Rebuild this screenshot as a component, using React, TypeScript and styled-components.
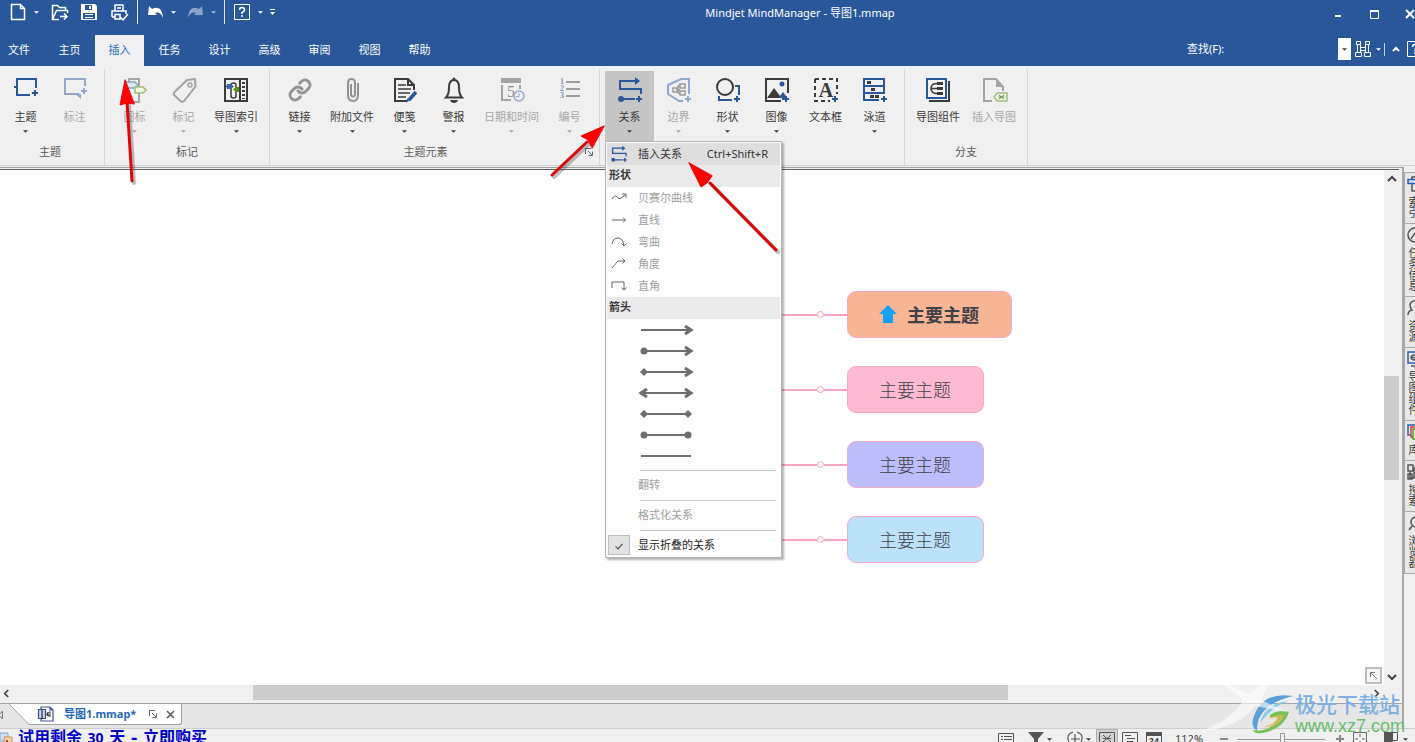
import React from "react";
import styled, { createGlobalStyle, css } from "styled-components";
import { Link as LinkIcon } from "lucide-react";

const BLUE = "#2a579a";
const DARK = "#3b3b3b";

const Global = createGlobalStyle`
  html, body, #root { height: 100%; }
  body {
    margin: 0;
    overflow: hidden;
    font-family: "Noto Sans", "Noto Sans CJK SC", sans-serif;
    font-size: 11px;
    line-height: 16px;
    color: ${DARK};
  }
  *, *::before, *::after { box-sizing: border-box; }
  button, input, select { font: inherit; color: inherit; }
  svg { display: block; flex: none; overflow: visible; }
`;

const Shell = styled.div`
  position: relative;
  display: flex;
  flex-direction: column;
  height: 100vh;
  overflow: hidden;
  background: #f0f0f0;
`;

const PlainButton = styled.button`
  display: flex;
  align-items: center;
  justify-content: center;
  padding: 0;
  border: 0;
  background: transparent;
  flex: none;
`;

/* ---------- title bar ---------- */

const TitleBar = styled.header`
  display: flex;
  flex: none;
  height: 35px;
  background: ${BLUE};
  color: #fff;
`;

const QuickAccess = styled.div`
  display: flex;
  align-items: center;
  height: 24px;
  padding-left: 4px;
`;

const QuickButton = styled(PlainButton)<{ $wide?: boolean; $dim?: boolean }>`
  width: ${(p) => (p.$wide ? 30 : 28)}px;
  height: 24px;
  opacity: ${(p) => (p.$dim ? 0.45 : 1)};
`;

const CaretButton = styled(PlainButton)<{ $dim?: boolean }>`
  width: 8px;
  height: 20px;
  margin-right: 4px;
  opacity: ${(p) => (p.$dim ? 0.6 : 1)};
`;

const QuickDivider = styled.span`
  width: 1px;
  height: 24px;
  margin: 0 3px;
  background: #dfe6f1;
`;

const WindowTitle = styled.h1`
  flex: 1;
  margin: 0;
  padding-top: 5px;
  font-size: 11px;
  font-weight: 400;
  text-align: center;
`;

const WindowButtons = styled.div`
  display: flex;
  width: 95px;
  height: 28px;
  overflow: hidden;
`;

const WindowButton = styled(PlainButton)`
  width: 36px;
  height: 28px;
`;

/* ---------- ribbon tabs ---------- */

const TabRow = styled.nav`
  display: flex;
  flex: none;
  height: 31px;
  background: ${BLUE};
  color: #fff;
`;

const Tab = styled.button<{ $active?: boolean; $first?: boolean }>`
  width: ${(p) => (p.$first ? 45 : 50)}px;
  padding: 0 0 1px;
  border: 0;
  border-right: 1px solid ${BLUE};
  background: ${(p) => (p.$active ? "#f0f0f0" : "transparent")};
  color: ${(p) => (p.$active ? "#2b6cb8" : "#fff")};
  ${(p) => p.$first && css`padding-left: 8px; text-align: left;`}
`;

const Search = styled.div`
  display: flex;
  align-items: center;
  width: 228px;
  height: 28px;
  margin-left: auto;
  overflow: hidden;
`;

const SearchLabel = styled.label`
  width: 40px;
  flex: none;
`;

const SearchInput = styled.input`
  width: 111px;
  height: 22px;
  flex: none;
  padding: 0 4px;
  border: 0;
  background: transparent;
  color: #fff;
`;

const SearchDrop = styled(PlainButton)`
  width: 13px;
  height: 22px;
  background: #fff;
  color: #444;
`;

const SearchTool = styled(PlainButton)<{ $w: number }>`
  width: ${(p) => p.$w}px;
  height: 22px;
`;

const SearchDivider = styled.span`
  width: 1px;
  height: 13px;
  flex: none;
  margin: 0 3px;
  background: #c5d0e2;
`;

/* ---------- ribbon ---------- */

const Ribbon = styled.section`
  display: flex;
  flex: none;
  height: 100px;
  padding-top: 3px;
  border-bottom: 1px solid #cfcfcf;
  background: #f0f0f0;
`;

const Group = styled.div<{ $first?: boolean }>`
  position: relative;
  display: flex;
  flex-direction: column;
  flex: none;
  padding: 2px 5px 0 ${(p) => (p.$first ? 1 : 5)}px;
  border-right: 1px solid #d4d4d4;
`;

const GroupButtons = styled.div`
  display: flex;
  height: 70px;
`;

const GroupTitle = styled.div<{ $launcher?: boolean }>`
  padding: 3px ${(p) => (p.$launcher ? 18 : 0)}px 0 0;
  text-align: center;
  color: #5a5a5a;
`;

const Launcher = styled(PlainButton)`
  position: absolute;
  right: 6px;
  bottom: 9px;
  width: 9px;
  height: 9px;
`;

const RibbonButton = styled.button<{ $dim?: boolean; $open?: boolean }>`
  display: flex;
  flex-direction: column;
  align-items: center;
  min-width: 49px;
  height: 70px;
  padding: 5px 6px 0;
  border: 0;
  background: ${(p) => (p.$open ? "#c5c5c5" : "transparent")};
  color: ${(p) => (p.$dim ? "#a6a6a6" : "#3a3a3a")};
  white-space: nowrap;
`;

const ButtonLabel = styled.span`
  margin-top: 5px;
  line-height: 16px;
`;

const ButtonCaret = styled.span`
  display: flex;
  align-items: center;
  height: 12px;
`;

const MenuAnchor = styled.div`
  position: relative;
`;

/* ---------- drop-down menu ---------- */

const Menu = styled.div`
  position: absolute;
  z-index: 5;
  top: 70px;
  left: 0;
  width: 177px;
  padding: 1px;
  border: 1px solid #b4b4b4;
  background: #fdfdfd;
  box-shadow: 2px 2px 2px rgba(0, 0, 0, 0.3);
`;

const MenuRow = styled.button<{ $dim?: boolean; $hot?: boolean }>`
  display: flex;
  align-items: center;
  width: 100%;
  height: 22px;
  padding: 0 12px 0 1px;
  border: 0;
  background: ${(p) => (p.$hot ? "#dedede" : "transparent")};
  color: ${(p) => (p.$dim ? "#a0a0a0" : "#333")};
  text-align: left;
`;

const MenuIcon = styled.span`
  display: flex;
  justify-content: center;
  width: 22px;
  margin-right: 8px;
  flex: none;
`;

const Shortcut = styled.span`
  margin-left: auto;
`;

const MenuHeading = styled.div`
  height: 22px;
  padding: 2px 2px 0;
  background: #eaeaea;
  font-weight: 700;
`;

const ArrowRow = styled.button`
  display: flex;
  align-items: center;
  width: 100%;
  height: 21px;
  padding: 0 0 0 33px;
  border: 0;
  background: transparent;
`;

const MenuLine = styled.hr`
  height: 1px;
  margin: 4px 4px 3px 33px;
  border: 0;
  background: #c8c8c8;
`;

const CheckRow = styled.label`
  display: flex;
  align-items: center;
  height: 22px;
  padding-left: 1px;
  color: #222;
`;

const CheckBox = styled.input`
  appearance: none;
  display: grid;
  place-items: center;
  width: 22px;
  height: 20px;
  margin: 0 8px 0 0;
  border: 1px solid #bdbdbd;
  background: #e2e2e2;
  &:checked::before {
    content: "";
    width: 4px;
    height: 7px;
    border: solid #444;
    border-width: 0 1px 1px 0;
    transform: rotate(42deg);
  }
`;

/* ---------- workspace ---------- */

const Workspace = styled.main`
  display: flex;
  flex: 1;
  min-height: 0;
`;

const DocumentPane = styled.div`
  display: flex;
  flex-direction: column;
  flex: 1;
  min-width: 0;
  margin-top: 1px;
  border-top: 1px solid #a0a0a0;
  border-right: 2px solid #a8a8a8;
`;

const Viewport = styled.div`
  display: flex;
  flex: 1;
  min-height: 0;
  margin: 1px 3px 0 0;
  border-top: 1px solid #5f5f5f;
`;

const Canvas = styled.div`
  position: relative;
  flex: 1;
  overflow: hidden;
  background: #fff;
`;

const Branches = styled.div`
  position: absolute;
  top: 121px;
  left: 770px;
  display: flex;
  flex-direction: column;
  gap: 28px;
`;

const Branch = styled.div`
  display: flex;
  align-items: center;
`;

const Wire = styled.span<{ $w: number }>`
  width: ${(p) => p.$w}px;
  height: 2px;
  background: #f6a6bf;
`;

const Joint = styled.span`
  width: 7px;
  height: 7px;
  border: 1px solid #f3a0ba;
  border-radius: 50%;
  background: #fff;
`;

const Topic = styled.div<{ $fill: string; $strong?: boolean }>`
  display: flex;
  align-items: center;
  gap: 10px;
  height: 47px;
  padding: 0 32px 1px 31px;
  border: 1px solid #f5a9c8;
  border-radius: 9px;
  background: ${(p) => p.$fill};
  color: #3f4048;
  font-family: "Noto Sans CJK SC", sans-serif;
  font-size: 18px;
  line-height: 26px;
  font-weight: ${(p) => (p.$strong ? 700 : 300)};
`;

const FitButton = styled(PlainButton)`
  position: absolute;
  right: 2px;
  bottom: 1px;
  width: 17px;
  height: 17px;
  border: 2px solid #bdbdbd;
  background: #f5f5f5;
`;

const VScroll = styled.div`
  display: flex;
  flex-direction: column;
  width: 15px;
  background: #f0f0f0;
`;

const HScroll = styled.div`
  display: flex;
  flex: none;
  height: 15px;
  padding-right: 19px;
  background: #f0f0f0;
`;

const ScrollButton = styled(PlainButton)`
  min-width: 13px;
  min-height: 17px;
  max-height: 17px;
`;

const Track = styled.span<{ $grow: number; $thumb?: boolean }>`
  flex: ${(p) => p.$grow} 1 0;
  background: ${(p) => (p.$thumb ? "#cdcdcd" : "transparent")};
`;

const DocTabs = styled.div`
  display: flex;
  flex: none;
  height: 25px;
  margin-top: 3px;
  border-top: 1px solid #a3a3a3;
  background: #e6e6e6;
`;

const DocTab = styled.div`
  display: flex;
  align-items: center;
  height: 21px;
  padding: 0 6px 0 7px;
  border: solid #a3a3a3;
  border-width: 0 1px 1px 0;
  border-radius: 0 0 3px 0;
  background: #fff;
`;

const DocName = styled.span`
  margin: 0 13px 0 10px;
  color: #1f68b8;
  font-weight: 700;
`;

const DocClose = styled(PlainButton)`
  margin-left: 9px;
`;

const Sidebar = styled.aside`
  display: flex;
  flex-direction: column;
  width: 11px;
  flex: none;
  padding-top: 6px;
  overflow: hidden;
  background: #f0f0f0;
`;

const SideTab = styled.button`
  display: flex;
  flex-direction: column;
  align-items: flex-start;
  gap: 4px;
  flex: none;
  width: 26px;
  padding: 3px 0 5px 2px;
  border: solid #a8a8a8;
  border-width: 1px 0 0 1px;
  background: #e8e8e8;
  &:last-child { border-bottom-width: 1px; }
`;

const SideText = styled.span`
  writing-mode: vertical-rl;
  line-height: 12px;
`;

/* ---------- status bar ---------- */

const StatusBar = styled.footer`
  flex: none;
  height: 14px;
  overflow: hidden;
  background: #f0f0f0;
  border-top: 1px solid #cdcdcd;
`;

const StatusRow = styled.div`
  display: flex;
  align-items: center;
  height: 20px;
`;

const TrialLink = styled.a`
  display: flex;
  align-items: center;
  gap: 4px;
  height: 18px;
  align-self: flex-start;
  color: #0000c4;
  font-family: "DejaVu Sans", "Noto Sans CJK SC", sans-serif;
  font-size: 16px;
  line-height: 18px;
  font-weight: 700;
  text-decoration: none;
  white-space: nowrap;
`;

const TrialDays = styled.span`
  font-family: "Noto Sans", sans-serif;
  font-size: 14px;
`;

const StatusTools = styled.div`
  display: flex;
  align-items: center;
  margin-left: auto;
  padding-right: 2px;
`;

const StatusButton = styled(PlainButton)<{ $w: number; $gap?: number; $on?: boolean }>`
  width: ${(p) => p.$w}px;
  height: 20px;
  margin-left: ${(p) => p.$gap ?? 0}px;
  ${(p) => p.$on && css`border: 1px solid #b0b0b0; background: #d2d2d2;`}
`;

const ZoomValue = styled.span`
  width: 51px;
  padding-left: 9px;
  color: #444;
`;

const ZoomSlider = styled.input`
  appearance: none;
  width: 88px;
  height: 12px;
  margin: 0 6px;
  background: linear-gradient(#9a9a9a, #9a9a9a) center / 100% 1px no-repeat;
  &::-webkit-slider-thumb {
    appearance: none;
    width: 5px;
    height: 12px;
    border: 1px solid #9a9a9a;
    background: #f0f0f0;
  }
`;

/* ---------- overlays ---------- */

const Pointers = styled.svg`
  position: absolute;
  z-index: 10;
  top: 0;
  left: 0;
  pointer-events: none;
`;

const Watermark = styled.div`
  position: absolute;
  z-index: 9;
  right: 10px;
  bottom: 6px;
  display: flex;
  align-items: center;
  pointer-events: none;
`;

const Beam = styled.svg`
  position: absolute;
  right: 96px;
  bottom: -2px;
`;

const MarkName = styled.div`
  color: #7db0e2;
  font-size: 21px;
  line-height: 24px;
  font-weight: 500;
`;

const MarkUrl = styled.div`
  color: #67bd6a;
  font-family: "Liberation Sans", sans-serif;
  font-size: 18px;
  line-height: 20px;
`;

/* ---------- drawings ---------- */

const Caret = ({ w = 5, color = "currentColor" }: { w?: number; color?: string }) => (
  <svg width={w} height={3} viewBox="0 0 6 3"><path d="M0 0h6L3 3z" fill={color} /></svg>
);

const Pic = ({ children, size = 28, box = 28 }: { children: React.ReactNode; size?: number; box?: number }) => (
  <svg width={size} height={size} viewBox={`0 0 ${box} ${box}`} fill="none">{children}</svg>
);

const RelationDrawing = () => (
  <>
    <path d="M3 5h18M4 5v8H25v5" stroke={BLUE} strokeWidth="2" />
    <path d="M19 1v8l5-4z" fill={BLUE} />
    <circle cx="5" cy="23" r="3" fill={BLUE} />
    <path d="M6 23h13M20 23h6M23 20v6" stroke={BLUE} strokeWidth="2" />
  </>
);

const icons: Record<string, React.ReactNode> = {
  topic: <Pic><path d="M18 19H5V3h19v9M2 11h3M20 17h6M23 14v6" stroke={BLUE} strokeWidth="2" /></Pic>,
  callout: <Pic><path d="M18 18H4V3h20v7M20 15h6M23 12v6" stroke="#94a7c8" strokeWidth="2" /><path d="M14 18h6v5z" fill="#94a7c8" /></Pic>,
  marker: (
    <Pic>
      <path d="M8 7V3h10v8M18 17v9H8v-8" stroke="#a6a6a6" strokeWidth="2" />
      <path d="M5 6h9l3 3-3 3H5z" fill="#dfe7f3" stroke="#8aa2cc" strokeWidth="1.500" />
      <path d="M14 11h8l3 3-3 3h-8z" fill="#edf5e4" stroke="#9fbf7d" strokeWidth="1.500" />
    </Pic>
  ),
  tag: <Pic><path d="M17 4l8-1 .5 7.500L14 25q-2 1.500-3.500 0l-6-5.500q-1.500-1.500 0-3.500z" stroke="#a3a3a3" strokeWidth="2" /><circle cx="20" cy="9" r="2" stroke="#a3a3a3" strokeWidth="1.500" /></Pic>,
  index: (
    <Pic>
      <path d="M3 3h22v22H3zM18 3v22" stroke={DARK} strokeWidth="2" />
      <path d="M21.500 6v17" stroke={DARK} strokeWidth="3" strokeDasharray="2 2" />
      <path d="M9 20V9q0-2 2.500-2T14 9v11q0 2-2.500 2T9 20z" stroke={DARK} strokeWidth="1.500" />
      <path d="M4 10.500h5M14 13.500h4" stroke={DARK} strokeWidth="1.500" />
      <path d="M5 8h4l3 2.500L9 13H5z" fill="#3c66ad" /><path d="M11 13.500l3-2.500h3v5h-3z" fill="#5a9216" />
    </Pic>
  ),
  link: <Pic><g transform="translate(2 2)"><LinkIcon size={24} color="#939393" strokeWidth={3} /></g></Pic>,
  clip: <Pic><path d="M13 8v10q0 2.500 2 2.500t2-2.500V7q0-4-3.500-4T10 7v12q0 6 5 6t5-6V7" stroke="#939393" strokeWidth="2" /></Pic>,
  note: (
    <Pic>
      <path d="M16 25H4V3h13l6 6v5M17 3v6h6" stroke={DARK} strokeWidth="2" />
      <path d="M7 9h8M7 13h13M7 17h12M7 21h8" stroke={DARK} strokeWidth="1.500" />
      <path d="M18 24l7-8" stroke={BLUE} strokeWidth="3.500" /><path d="M15 26.500l1-4 3 2z" fill={BLUE} />
    </Pic>
  ),
  bell: <Pic><path d="M6 21.500q3-3 3-10Q9 4 14 4t5 7.500q0 7 3 10z" stroke={DARK} strokeWidth="2" /><circle cx="14" cy="3" r="1.500" fill={DARK} /><path d="M10 24h8q-1 3-4 3t-4-3z" fill={DARK} /></Pic>,
  date: (
    <Pic>
      <path d="M3 2h20v5H3z" fill="#a3a3a3" /><path d="M4 9v15h9M22 9v4" stroke="#a3a3a3" strokeWidth="2" />
      <text x="9" y="21" fontSize="16" fontFamily="Liberation Serif" fill="#8c8c8c">5</text>
      <circle cx="21" cy="20" r="5" fill="#f0f0f0" stroke="#93a8cf" strokeWidth="1.500" /><path d="M21 17v3.500h-3" stroke="#93a8cf" />
    </Pic>
  ),
  number: (
    <Pic>
      <path d="M10 6h14M10 13h14M10 20h14" stroke="#9c9c9c" strokeWidth="2" />
      {["1", "2", "3"].map((n, i) => <text key={n} x="4" y={8 + i * 7} fontSize="8" fontFamily="Liberation Serif" fontWeight="700" fill="#8094c2">{n}</text>)}
    </Pic>
  ),
  relation: <Pic><RelationDrawing /></Pic>,
  boundary: (
    <Pic>
      <path d="M24 18V3h-8L3 9v9l11 7h4M20 23h6M23 20v6" stroke="#8ea8d2" strokeWidth="2" />
      <path d="M8 12h4v4H8zM15 8h5v4h-5zM15 15h5v4h-5zM12 14h3M15 10h-2v7h2" stroke="#9b9b9b" strokeWidth="1.500" />
    </Pic>
  ),
  shape: <Pic><circle cx="11" cy="11" r="8" stroke={DARK} strokeWidth="2" /><path d="M21 10h4v9M5 20v4h13M20 23h6M23 20v6" stroke={BLUE} strokeWidth="2" /></Pic>,
  image: (
    <Pic>
      <path d="M18 25H3V3h22v14" stroke={DARK} strokeWidth="2" /><path d="M4 22l7-10 6 8 3-3 2 3-4 2z" fill={DARK} />
      <path d="M16 22l4-6 3 4v2z" fill={BLUE} /><circle cx="19" cy="8" r="2.500" fill={BLUE} /><path d="M19 23h7M23 20v6" stroke={BLUE} strokeWidth="2" />
    </Pic>
  ),
  textbox: (
    <Pic>
      <path d="M3 3h22v15M3 3v22h15" stroke={DARK} strokeWidth="2" strokeDasharray="4 3" />
      <text x="14" y="21" textAnchor="middle" fontSize="20" fontFamily="Liberation Serif" fontWeight="700" fill={DARK}>A</text>
      <path d="M20 23h6M23 20v6" stroke={BLUE} strokeWidth="2" />
    </Pic>
  ),
  lanes: (
    <Pic>
      <path d="M18 24H3V3h20v15M3 10h20M3 17h20" stroke={BLUE} strokeWidth="2" />
      <path d="M6 5h4v3H6zM10 12h4v3h-4zM9 19h4v3H9zM14 19h4v3h-4z" fill={DARK} /><path d="M20 23h6M23 20v6" stroke={BLUE} strokeWidth="2" />
    </Pic>
  ),
  parts: (
    <Pic>
      <path d="M5 25h20V5" stroke={DARK} strokeWidth="2" /><path d="M3 3h19v19H3z" stroke={BLUE} strokeWidth="2" fill="#f4f4f4" />
      <path d="M13 7.500q-6 0-6 5t6 5M7 12.500h6" stroke={DARK} strokeWidth="1.500" /><path d="M13 6h6v3h-6zM13 11h6v3h-6zM13 16h6v3h-6z" fill={DARK} />
    </Pic>
  ),
  insertMap: (
    <Pic>
      <path d="M12 25H4V3h12l7 8v4" stroke="#a3a3a3" strokeWidth="2" /><path d="M16 2l8 9h-8z" fill="#a3a3a3" />
      <path d="M14 21l3-4h10v8H17z" fill="#eef5e6" stroke="#9cbf80" strokeWidth="1.500" /><path d="M19 19l5 4M24 19l-5 4M18.500 21h6" stroke="#6f9152" />
    </Pic>
  ),
};

type Cmd = { icon: string; label: string; dim?: boolean; caret?: boolean; menu?: boolean };
const groups: { title: string; launcher?: boolean; items: Cmd[] }[] = [
  { title: "主题", items: [{ icon: "topic", label: "主题", caret: true }, { icon: "callout", label: "标注", dim: true }] },
  { title: "标记", items: [
    { icon: "marker", label: "图标", dim: true, caret: true },
    { icon: "tag", label: "标记", dim: true, caret: true },
    { icon: "index", label: "导图索引", caret: true },
  ] },
  { title: "主题元素", launcher: true, items: [
    { icon: "link", label: "链接", caret: true },
    { icon: "clip", label: "附加文件", caret: true },
    { icon: "note", label: "便笺", caret: true },
    { icon: "bell", label: "警报", caret: true },
    { icon: "date", label: "日期和时间", dim: true, caret: true },
    { icon: "number", label: "编号", dim: true, caret: true },
  ] },
  { title: "", items: [
    { icon: "relation", label: "关系", caret: true, menu: true },
    { icon: "boundary", label: "边界", dim: true, caret: true },
    { icon: "shape", label: "形状", caret: true },
    { icon: "image", label: "图像", caret: true },
    { icon: "textbox", label: "文本框" },
    { icon: "lanes", label: "泳道", caret: true },
  ] },
  { title: "分支", items: [{ icon: "parts", label: "导图组件" }, { icon: "insertMap", label: "插入导图", dim: true }] },
];

const lineShapes = [
  { label: "贝赛尔曲线", d: "M1 9q3-5 5-2t4 1l4-3M11 4h4v4" },
  { label: "直线", d: "M1 8h13M12 5.500L14.500 8 12 10.500" },
  { label: "弯曲", d: "M1 10q1-6 6-6t6 8M10.500 9.500L13 12l2.500-2.500" },
  { label: "角度", d: "M1 12l6-7h7M11.500 2.500L14 5l-2.500 2.500" },
  { label: "直角", d: "M1 10V4h12v8M10.500 9.500L13 12l2.500-2.500" },
];

type End = "none" | "dot" | "diamond" | "arrow";
const arrowStyles: [End, End][] = [
  ["none", "arrow"], ["dot", "arrow"], ["diamond", "arrow"], ["arrow", "arrow"],
  ["diamond", "diamond"], ["dot", "dot"], ["none", "none"],
];

const EndMark = ({ kind, right }: { kind: End; right?: boolean }) => {
  const x = right ? 48 : 4;
  if (kind === "dot") return <circle cx={x} cy="5" r="3.500" fill="#6e6e6e" />;
  if (kind === "diamond") return <path d={`M${x - 4} 5l4-4 4 4-4 4z`} fill="#6e6e6e" />;
  if (kind === "arrow") return <path d={right ? "M45 1l6 4-6 4" : "M7 1L1 5l6 4"} fill="none" stroke="#6e6e6e" strokeWidth="3" />;
  return null;
};

const RelationMenu = () => (
  <Menu role="menu">
    <MenuRow $hot role="menuitem">
      <MenuIcon><Pic size={18}><RelationDrawing /></Pic></MenuIcon>
      插入关系<Shortcut>Ctrl+Shift+R</Shortcut>
    </MenuRow>
    <MenuHeading>形状</MenuHeading>
    {lineShapes.map((s) => (
      <MenuRow $dim key={s.label} role="menuitem">
        <MenuIcon><svg width="16" height="16" fill="none" stroke="#666"><path d={s.d} /></svg></MenuIcon>
        {s.label}
      </MenuRow>
    ))}
    <MenuHeading>箭头</MenuHeading>
    {arrowStyles.map(([a, b]) => (
      <ArrowRow key={a + b} role="menuitem" aria-label={`${a} ${b}`}>
        <svg width="52" height="10">
          <path d="M1 5h50" stroke="#6e6e6e" strokeWidth="2" />
          <EndMark kind={a} /><EndMark kind={b} right />
        </svg>
      </ArrowRow>
    ))}
    <MenuLine />
    <MenuRow $dim role="menuitem"><MenuIcon />翻转</MenuRow>
    <MenuLine />
    <MenuRow $dim role="menuitem"><MenuIcon />格式化关系</MenuRow>
    <MenuLine />
    <CheckRow><CheckBox type="checkbox" defaultChecked />显示折叠的关系</CheckRow>
  </Menu>
);

const Command = ({ cmd }: { cmd: Cmd }) => {
  const button = (
    <RibbonButton $dim={cmd.dim} $open={cmd.menu}>
      {icons[cmd.icon]}
      <ButtonLabel>{cmd.label}</ButtonLabel>
      {cmd.caret && <ButtonCaret><Caret /></ButtonCaret>}
    </RibbonButton>
  );
  return cmd.menu ? <MenuAnchor>{button}<RelationMenu /></MenuAnchor> : button;
};

const PopOut = () => (
  <svg width="8" height="8" fill="none" stroke="#666"><path d="M.5 6V.500H6M3 3l4 4M7.500 3.500v4h-4" /></svg>
);

const Chevron = ({ d, w = 8 }: { d: string; w?: number }) => (
  <svg width={w} height={w} viewBox="0 0 8 8" fill="none" stroke="#444" strokeWidth="2"><path d={d} /></svg>
);

const HelpBox = () => (
  <svg width="16" height="16" fill="none" stroke="#fff" strokeWidth="1.500">
    <path d="M.5.500h15v15H.5z" strokeWidth="1" /><path d="M5.500 6q0-2.500 2.500-2.500T10.500 6Q10.500 7.500 8 8.500V10M8 11v2" />
  </svg>
);

const Side = ({ children }: { children: React.ReactNode }) => (
  <svg width="16" height="16" fill="none" stroke="#555" strokeWidth="1.500">{children}</svg>
);

const sideTabs: { label: string; icon: React.ReactNode }[] = [
  { label: "索引", icon: <Side><path d="M5 8v7h8M5 3V1h8" /><path d="M1 3.500h9v4H1z" fill="#d4e2f8" stroke="#2c5fae" /></Side> },
  { label: "任务信息", icon: <Side><circle cx="8" cy="8" r="7" /><path d="M4 12l4-6 4 6" /></Side> },
  { label: "资源", icon: <Side><path d="M1 15q0-4 4-5Q3 8 3 5t4-4 4 4-2 5" /></Side> },
  { label: "导图组件", icon: <Side><path d="M1 1h11v11H1z" stroke="#2c5fae" /><path d="M4 15h11V4M9 4Q4 4 4 6.500T9 9M4 6.500h5" /></Side> },
  { label: "库", icon: <Side><path d="M1 1h9v10H1z" stroke="#2c5fae" /><path d="M4 3h9v10H4z" stroke="#d33" fill="#fff" /><path d="M6 5h9v10H6z" stroke="#4a9a20" fill="#e7f6d2" /></Side> },
  { label: "搜索", icon: <Side><path d="M1 1h5v6H1zM3 7v7h4V4h6M1 10h4v5H1z" /></Side> },
  { label: "浏览器", icon: <Side><circle cx="9" cy="7" r="5" /><path d="M5 11l-3 4" /></Side> },
];

const topics = [
  { fill: "#f8b595", strong: true },
  { fill: "#fbbad2" },
  { fill: "#bcbefb" },
  { fill: "#bce2fa" },
];

const MapIcon = () => (
  <svg width="16" height="16" fill="none" stroke="#3d5488" strokeWidth="1.200">
    <path d="M3 3V1h9l3 3v11H3v-2M12 1v3h3" /><path d="M.5 3.500h7v9h-7z" fill="#c9d3ea" /><path d="M4 3v10M13 6q-4 0-4 2t4 2M9 8h4" stroke="#333" />
  </svg>
);

const shafts = "M127 102l5 79M587 142l-35 33M710 183l66 67";
const heads = "M125 80l-5 25 7-2 7 1zM604 126l-23 10 7 4 4 8zM689 163l12 24 6-4 5-7z";

const RedPointers = () => (
  <Pointers width="800" height="270" viewBox="0 0 800 270" aria-hidden="true">
    <g transform="translate(2 2)" opacity="0.3" stroke="#333" fill="#333" strokeLinecap="round">
      <path d={shafts} strokeWidth="4" />
    </g>
    <g stroke="#dc0808" fill="#ff0000" strokeLinecap="round">
      <path d={shafts} strokeWidth="3" />
      <path d={heads} strokeWidth="1" />
    </g>
  </Pointers>
);

const SiteMark = () => (
  <Watermark>
    <Beam width="110" height="60" viewBox="0 0 110 60">
      <path d="M0 54Q36 40 44 22L22 4l28 12L72 0 62 22l26 12-32-6Q40 50 0 54z" fill="#fff" opacity="0.6" />
    </Beam>
    <svg width="44" height="42" viewBox="0 0 44 42">
      <path d="M42 3Q10-2 2 26q-2 8 4 12Q5 12 42 3z" fill="#5b9fd8" />
      <path d="M38 8Q14 10 9 30q14-18 29-22z" fill="#8cc9ea" />
      <path d="M19 22q8-6 19-3-5 17-27 21Q3 41 2 37q17 3 25-12-3-2-8 0z" fill="#74c25b" />
      <path d="M12 34q12-3 15-10l-9 2q7-5 15-4-6 14-21 12z" fill="#f2b84b" opacity="0.7" />
    </svg>
    <div>
      <MarkName>极光下载站</MarkName>
      <MarkUrl>www.xz7.com</MarkUrl>
    </div>
  </Watermark>
);

export default function App() {
  return (
    <Shell>
      <Global />
      <TitleBar>
        <QuickAccess>
          <QuickButton aria-label="新建"><svg width="16" height="18" fill="none" stroke="#fff" strokeWidth="1.500"><path d="M1.500 1.500h9l4 4v11h-13zM10.500 1.500v4h4" /></svg></QuickButton>
          <CaretButton aria-label="新建选项"><Caret /></CaretButton>
          <QuickButton $wide aria-label="打开"><svg width="17" height="18" fill="none" stroke="#fff" strokeWidth="1.500"><path d="M8 16.500H1.500v-14h5l2 2h6v3M1.500 16.500l4-9h11V10M9 13.500h6M13 10.500l3 3-3 3" /></svg></QuickButton>
          <QuickButton $wide aria-label="保存"><svg width="16" height="16"><path d="M0 0h14l2 2v14H0z" fill="#fff" /><path d="M4 1h7v5H4zM2 9h12v6H2z" fill={BLUE} /><path d="M8 2h2v3H8zM4 10h8v1H4zM4 13h8v1H4z" fill="#fff" /></svg></QuickButton>
          <QuickButton $wide aria-label="打印"><svg width="17" height="17" fill="none" stroke="#fff" strokeWidth="1.500"><path d="M4 7V1h8v6M1 13V7h14v3M1 13h3M4 10.500h5V15H4zM6 4h4M9 13l3 3 5-6" /></svg></QuickButton>
          <QuickDivider />
          <QuickButton aria-label="撤消"><svg width="15" height="13"><path d="M0 9L1 0l3 3q10-5 11 9-3-7-8-5l2 2z" fill="#fff" /></svg></QuickButton>
          <CaretButton aria-label="撤消选项"><Caret /></CaretButton>
          <QuickButton $dim aria-label="重做"><svg width="15" height="13"><path d="M15 9L14 0l-3 3Q1-2 0 12q3-7 8-5L6 9z" fill="#fff" /></svg></QuickButton>
          <CaretButton $dim aria-label="重做选项"><Caret /></CaretButton>
          <QuickDivider />
          <QuickButton aria-label="帮助"><HelpBox /></QuickButton>
          <CaretButton aria-label="帮助选项"><Caret /></CaretButton>
          <CaretButton aria-label="自定义"><svg width="5" height="7"><path d="M0 0h5v1H0zM0 3h5L2.500 6z" fill="#fff" /></svg></CaretButton>
        </QuickAccess>
        <WindowTitle>Mindjet MindManager - 导图1.mmap</WindowTitle>
        <WindowButtons>
          <WindowButton aria-label="最小化"><svg width="6" height="6"><path d="M0 4h6v2H0z" fill="#fff" /></svg></WindowButton>
          <WindowButton aria-label="最大化"><svg width="9" height="9"><path d="M.5.500h8v8h-8z" fill="none" stroke="#fff" /><path d="M0 0h9v2H0z" fill="#fff" /></svg></WindowButton>
          <WindowButton aria-label="关闭"><svg width="8" height="8"><path d="M0 0l8 8M8 0L0 8" stroke="#fff" strokeWidth="2" /></svg></WindowButton>
        </WindowButtons>
      </TitleBar>

      <TabRow>
        {["文件", "主页", "插入", "任务", "设计", "高级", "审阅", "视图", "帮助"].map((t, i) => (
          <Tab key={t} $first={i === 0} $active={t === "插入"}>{t}</Tab>
        ))}
        <Search>
          <SearchLabel htmlFor="find">查找(F):</SearchLabel>
          <SearchInput id="find" />
          <SearchDrop aria-label="查找历史"><Caret /></SearchDrop>
          <SearchTool $w={24} aria-label="查找">
            <svg width="16" height="16" fill="none" stroke="#fff"><path d="M1.500.500h4v3h-4zM10.500.500h4v3h-4zM2.500 3.500v8M5.500 3.500v8M10.500 3.500v8M13.500 3.500v8M.5 11.500h6v4h-6zM9.500 11.500h6v4h-6zM6 6.500h4M6 9.500h4" /></svg>
          </SearchTool>
          <SearchTool $w={6} aria-label="查找选项"><Caret /></SearchTool>
          <SearchDivider />
          <SearchTool $w={16} aria-label="折叠功能区"><svg width="8" height="6" fill="none" stroke="#fff" strokeWidth="2"><path d="M1 5l3-3 3 3" /></svg></SearchTool>
          <SearchTool $w={22} aria-label="帮助"><HelpBox /></SearchTool>
        </Search>
      </TabRow>

      <Ribbon>
        {groups.map((g, i) => (
          <Group key={g.items[0].label} $first={i === 0}>
            <GroupButtons>{g.items.map((c) => <Command key={c.label} cmd={c} />)}</GroupButtons>
            <GroupTitle $launcher={g.launcher}>{g.title}</GroupTitle>
            {g.launcher && <Launcher aria-label="更多选项"><PopOut /></Launcher>}
          </Group>
        ))}
      </Ribbon>

      <Workspace>
        <DocumentPane>
          <Viewport>
            <Canvas>
              <Branches>
                {topics.map((t) => (
                  <Branch key={t.fill}>
                    <Wire $w={47} /><Joint /><Wire $w={23} />
                    <Topic $fill={t.fill} $strong={t.strong}>
                      {t.strong && <svg width="18" height="18"><path d="M9 0l9 9h-4v9H4V9H0z" fill="#14a0f8" /></svg>}
                      主要主题
                    </Topic>
                  </Branch>
                ))}
              </Branches>
              <FitButton aria-label="适合窗口"><svg width="9" height="9" fill="none" stroke="#777"><path d="M1.500 6V1.500H6M2 2l6 6" /></svg></FitButton>
            </Canvas>
            <VScroll>
              <ScrollButton aria-label="向上滚动"><Chevron d="M0 6l4-4 4 4" /></ScrollButton>
              <Track $grow={189} /><Track $grow={103} $thumb /><Track $grow={188} />
              <ScrollButton aria-label="向下滚动"><Chevron d="M0 2l4 4 4-4" /></ScrollButton>
            </VScroll>
          </Viewport>
          <HScroll>
            <ScrollButton aria-label="向左滚动"><Chevron w={7} d="M6 0L2 4l4 4" /></ScrollButton>
            <Track $grow={240} /><Track $grow={754} $thumb /><Track $grow={362} />
            <ScrollButton aria-label="向右滚动"><Chevron w={7} d="M2 0l4 4-4 4" /></ScrollButton>
          </HScroll>
          <DocTabs>
            <svg width="31" height="22" fill="none" stroke="#a3a3a3">
              <path d="M9 0h22v20.500H30z" fill="#fff" stroke="none" /><path d="M9 0l20 20.500h2" /><path d="M2.500 7v8L-1 11z" stroke="#777" />
            </svg>
            <DocTab>
              <MapIcon />
              <DocName>导图1.mmap*</DocName>
              <PlainButton aria-label="弹出窗口"><PopOut /></PlainButton>
              <DocClose aria-label="关闭文档"><svg width="9" height="9" stroke="#555"><path d="M1 1l7 7M8 1L1 8" strokeWidth="1.500" /></svg></DocClose>
            </DocTab>
          </DocTabs>
        </DocumentPane>
        <Sidebar>
          {sideTabs.map((s) => (
            <SideTab key={s.label}>{s.icon}<SideText>{s.label}</SideText></SideTab>
          ))}
        </Sidebar>
      </Workspace>

      <StatusBar>
        <StatusRow>
          <TrialLink href="#buy">
            <svg width="14" height="18"><path d="M0 4h8v8H0z" fill="#cfe3f4" stroke="#7aa5cc" /><path d="M4 8h8v8H4z" fill="#f8d9a8" stroke="#d08a4a" /><path d="M6 11h2v2H6z" fill="#d33" /></svg>
            <span>试用剩余 <TrialDays>30</TrialDays> 天 - 立即购买</span>
          </TrialLink>
          <StatusTools>
            <StatusButton $w={18} aria-label="大纲"><svg width="16" height="14" fill="none" stroke="#555"><path d="M.5 1.500h15v12H.5zM3 4.500h2M6 4.500h8M3 7.500h2M6 7.500h8M3 10.500h2M6 10.500h8" /></svg></StatusButton>
            <StatusButton $w={18} $gap={12} aria-label="筛选"><svg width="16" height="14"><path d="M0 0h16l-6 7v7H6V7z" fill="#555" /></svg></StatusButton>
            <CaretButton aria-label="筛选选项"><Caret /></CaretButton>
            <StatusButton $w={18} $gap={9} aria-label="展开"><svg width="16" height="16" fill="none" stroke="#555" strokeWidth="1.200"><path d="M6 1Q0 3 1 8t6 7M10 1q6 2 5 7t-5 7M8 3v10M4 8h9" /></svg></StatusButton>
            <CaretButton aria-label="展开选项"><Caret /></CaretButton>
            <StatusButton $w={22} $on aria-label="导图视图"><svg width="16" height="14" fill="none" stroke="#555"><path d="M.5.500h15v12H.5zM4 3l8 7M12 3l-8 7M4 6.500h8" /></svg></StatusButton>
            <StatusButton $w={24} aria-label="大纲视图"><svg width="16" height="14" fill="none" stroke="#555"><path d="M.5.500h15v12H.5zM3 3.500h6M5 6.500h8M5 9.500h6" /></svg></StatusButton>
            <StatusButton $w={24} aria-label="日程视图"><svg width="16" height="15"><path d="M.5.500h15v14H.5z" fill="none" stroke="#555" /><path d="M0 0h16v4H0z" fill="#555" /><text x="8" y="12" textAnchor="middle" fontSize="9" fontWeight="700" fill="#444">24</text></svg></StatusButton>
            <ZoomValue>112%</ZoomValue>
            <StatusButton $w={14} aria-label="缩小"><svg width="8" height="2"><path d="M0 0h8v2H0z" fill="#888" /></svg></StatusButton>
            <ZoomSlider type="range" aria-label="缩放" min={0} max={100} defaultValue={52} />
            <StatusButton $w={18} aria-label="放大"><svg width="8" height="8"><path d="M0 3h8v2H0zM3 0h2v8H3z" fill="#888" /></svg></StatusButton>
            <StatusButton $w={22} aria-label="适合页面"><svg width="14" height="14" fill="none" stroke="#666"><path d="M.5.500h13v13H.5zM7 2v3M7 9v3M2 7h3M9 7h3" /></svg></StatusButton>
            <StatusButton $w={20} $gap={10} aria-label="任务窗格"><svg width="14" height="14"><path d="M0 0h9v14H0z" fill="#555" /><path d="M9 .5h4.500v8H9" fill="none" stroke="#555" /></svg></StatusButton>
            <CaretButton aria-label="窗格选项"><Caret /></CaretButton>
          </StatusTools>
        </StatusRow>
      </StatusBar>

      <SiteMark />
      <RedPointers />
    </Shell>
  );
}
